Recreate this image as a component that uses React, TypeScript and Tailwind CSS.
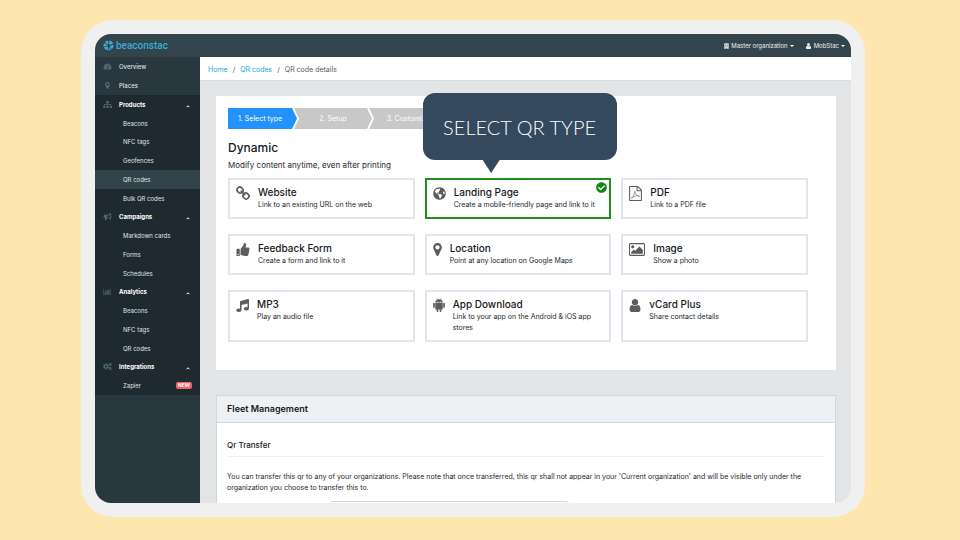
import type { ComponentType, ReactNode } from "react";
import {
  FaBuilding,
  FaBullhorn,
  FaCheckCircle,
  FaCogs,
  FaGlobeAmericas,
  FaSitemap,
  FaTachometerAlt,
  FaThumbsUp,
} from "react-icons/fa";

type IconProps = { className?: string };

const PinIcon = ({ className }: IconProps) => (
  <svg viewBox="384 128 1024 1536" fill="currentColor" className={className} aria-hidden="true">
    <path d="M1152 640q0-106-75-181t-181-75-181 75-75 181 75 181 181 75 181-75 75-181zm256 0q0 109-33 179l-364 774q-16 33-47.5 52t-67.5 19-67.5-19-46.5-52l-365-774q-33-70-33-179 0-212 150-362t362-150 362 150 150 362z" />
  </svg>
);

const UserIcon = ({ className }: IconProps) => (
  <svg viewBox="256 128 1280 1536" fill="currentColor" className={className} aria-hidden="true">
    <path d="M1536 1399q0 109-62.5 187t-150.5 78h-854q-88 0-150.5-78t-62.5-187q0-85 8.5-160.5t31.5-152 58.5-131 94-89 134.5-34.5q131 128 313 128t313-128q76 0 134.5 34.5t94 89 58.5 131 31.5 152 8.5 160.5zm-256-887q0 159-112.5 271.5t-271.5 112.5-271.5-112.5-112.5-271.5 112.5-271.5 271.5-112.5 271.5 112.5 112.5 271.5z" />
  </svg>
);

const ImageIcon = ({ className }: IconProps) => (
  <svg viewBox="-64 128 1920 1536" fill="currentColor" className={className} aria-hidden="true">
    <path d="M576 576q0 80-56 136t-136 56-136-56-56-136 56-136 136-56 136 56 56 136zm1024 384v448h-1408v-192l320-320 160 160 512-512zm96-704h-1600q-13 0-22.500 9.500t-9.500 22.500v1216q0 13 9.500 22.500t22.500 9.500h1600q13 0 22.500-9.500t9.500-22.500v-1216q0-13-9.500-22.500t-22.500-9.500zm160 32v1216q0 66-47 113t-113 47h-1600q-66 0-113-47t-47-113v-1216q0-66 47-113t113-47h1600q66 0 113 47t47 113z" />
  </svg>
);

const MusicIcon = ({ className }: IconProps) => (
  <svg viewBox="0 0 26 26" fill="currentColor" className={className} aria-hidden="true">
    <path d="M8 5.500Q8 4.300 9.200 4L24 0.200Q26 0 26 2V19H23V9L11 12.200V22H8z" />
    <ellipse cx="5.700" cy="22.500" rx="5.300" ry="3.300" />
    <ellipse cx="20.700" cy="19.500" rx="5.300" ry="3.300" />
  </svg>
);

const PdfIcon = ({ className }: IconProps) => (
  <svg viewBox="128 0 1536 1792" fill="currentColor" className={className} aria-hidden="true">
    <path d="M1596 380q28 28 48 76t20 88v1152q0 40-28 68t-68 28h-1344q-40 0-68-28t-28-68v-1600q0-40 28-68t68-28h896q40 0 88 20t76 48zm-444-244v376h376q-10-29-22-41l-313-313q-12-12-41-22zm384 1528v-1024h-416q-40 0-68-28t-28-68v-416h-768v1536h1280z" />
    <path
      d="M430 1480q120-60 240-290t160-500q30-100 0-90t10 160q90 330 310 430t230 60-130-70-300 10-390 130-130 160z"
      fill="none"
      stroke="currentColor"
      strokeWidth="65"
    />
  </svg>
);

const ChainIcon = ({ className }: IconProps) => (
  <svg viewBox="0 0 26 26" fill="none" stroke="currentColor" strokeWidth="3.2" className={className} aria-hidden="true">
    <rect x="2" y="2.500" width="11" height="10" rx="4.500" transform="rotate(45 7.500 7.500)" />
    <rect x="13" y="13.500" width="11" height="10" rx="4.500" transform="rotate(45 18.500 18.500)" />
    <path d="M9 9l8 8" />
  </svg>
);

const AndroidIcon = ({ className }: IconProps) => (
  <svg viewBox="0 0 24 28" fill="currentColor" className={className} aria-hidden="true">
    <path
      fillRule="evenodd"
      d="M4.500 9C4.500 6.200 6 4.200 8.400 3L7 0.700L7.700 0.300L9.200 2.700Q12 1.800 14.800 2.700L16.300 0.300L17 0.700L15.600 3C18 4.200 19.500 6.200 19.500 9zM8 5.500v1.300h1.300V5.500zM14.700 5.500v1.300H16V5.500z"
    />
    <path d="M4.500 10h15v11.500q0 1.500-1.500 1.500h-1.300v3.400a1.600 1.600 0 0 1-3.300 0V23h-2.800v3.400a1.600 1.600 0 0 1-3.300 0V23H6q-1.500 0-1.500-1.500z" />
    <rect x="0.300" y="9.700" width="3.400" height="10" rx="1.700" />
    <rect x="20.300" y="9.700" width="3.400" height="10" rx="1.700" />
  </svg>
);

const ChartIcon = ({ className }: IconProps) => (
  <svg viewBox="0 0 16 14" fill="currentColor" className={className} aria-hidden="true">
    <path d="M0 1h1.200v11.800H16V14H0zM3 7h2v5H3zM6 3.500h2V12H6zM9 5.500h2V12H9zM12 2h2v10h-2z" />
  </svg>
);

const BrandMark = ({ className }: IconProps) => (
  <svg viewBox="0 0 24 24" fill="#35aed6" className={className} aria-hidden="true">
    <path d="M11 1a11 11 0 0 0-7 4l6 5 2-2z" />
    <path d="M13.500 1v7.500l2.500 2 6.500-3.500a11 11 0 0 0-9-6z" />
    <path d="M2.500 7a11 11 0 0 0-1.500 7l8.500-1v-2z" />
    <path d="M23 10l-7.500 3-.5 3 4.500 4a11 11 0 0 0 3.500-10z" />
    <path d="M1.500 16a11 11 0 0 0 8.500 7l1-7.500-2-1z" />
    <path d="M13 15.500l-1 7.500a11 11 0 0 0 5.500-1.500z" />
  </svg>
);

interface NavRow {
  label: string;
  icon?: ComponentType<IconProps>;
  active?: boolean;
  badge?: string;
}

const topLinks: NavRow[] = [
  { label: "Overview", icon: FaTachometerAlt },
  { label: "Places", icon: PinIcon },
];

// rows with an icon are group headings, the rest are their children
const menuRows: NavRow[] = [
  { label: "Products", icon: FaSitemap },
  { label: "Beacons" },
  { label: "NFC tags" },
  { label: "Geofences" },
  { label: "QR codes", active: true },
  { label: "Bulk QR codes" },
  { label: "Campaigns", icon: FaBullhorn },
  { label: "Markdown cards" },
  { label: "Forms" },
  { label: "Schedules" },
  { label: "Analytics", icon: ChartIcon },
  { label: "Beacons" },
  { label: "NFC tags" },
  { label: "QR codes" },
  { label: "Integrations", icon: FaCogs },
  { label: "Zapier", badge: "NEW" },
];

const Sidebar = () => (
  <nav className="w-[105px] shrink-0 bg-[#29373e] text-[6px] text-[#dfe3e5]">
    {topLinks.map(({ label, icon: Icon }) => (
      <a key={label} href="#" className="flex h-[19px] items-center pl-2 font-medium">
        <span className="flex w-4 shrink-0">{Icon && <Icon className="h-[7px] w-[9px] text-[#566a75]" />}</span>
        {label}
      </a>
    ))}
    <div className="grid h-[300px] auto-rows-fr bg-[#1f2a30]">
      {menuRows.map(({ label, icon: Icon, active, badge }, i) =>
        Icon ? (
          <button key={i} type="button" className="flex items-center pr-[10px] pl-2 text-left font-bold text-white">
            <span className="flex w-4 shrink-0">
              <Icon className="h-[7px] w-[9px] text-[#4d6876]" />
            </span>
            <span className="flex-1">{label}</span>
            <svg viewBox="0 0 8 5" className="mt-1 h-[3px] w-1" fill="none" stroke="currentColor" strokeWidth="2" aria-hidden="true">
              <path d="M1 4l3-3 3 3" />
            </svg>
          </button>
        ) : (
          <a
            key={i}
            href="#"
            className={`flex items-center justify-between pr-2 pl-7 ${active ? "bg-[#31434b]" : ""}`}
          >
            {label}
            {badge && <span className="rounded-xs bg-[#f4636a] px-[2px] text-[5px] leading-[7px] font-bold text-white">{badge}</span>}
          </a>
        )
      )}
    </div>
  </nav>
);

const Caret = () => <span className="ml-[2px] border-x-2 border-t-2 border-x-transparent border-t-white" />;

const Header = () => (
  <header className="flex h-[23px] shrink-0 items-center bg-[#33444c] pr-[6px] pl-2 text-[6px] text-[#eef1f2]">
    <a href="#" className="flex items-center gap-[2px] font-[Roboto] text-[10px] font-medium text-[#35aed6]">
      <BrandMark className="h-[11px] w-[11px]" />
      beaconstac
    </a>
    <button type="button" className="ml-auto flex items-center">
      <FaBuilding className="mr-[2px] h-[6px] w-[5px]" />
      Master organization
      <Caret />
    </button>
    <button type="button" className="ml-3 flex items-center">
      <UserIcon className="mr-[3px] h-[6px] w-[5px]" />
      MobStac
      <Caret />
    </button>
  </header>
);

const Breadcrumb = () => (
  <div className="flex h-6 items-center gap-[5px] border-b border-[#d3dde3] bg-white px-2 pt-1 text-[7px] text-[#55616a]">
    <a href="#" className="text-[#20a8d8]">Home</a>
    <span>/</span>
    <a href="#" className="text-[#20a8d8]">QR codes</a>
    <span>/</span>
    <span>QR code details</span>
  </div>
);

const Steps = () => (
  <ol className="flex h-[21px] text-[7px] text-white">
    <li className="flex w-[69px] items-center bg-[#2492fc] pt-px pl-[10px] [clip-path:polygon(0_0,64px_0,100%_50%,64px_100%,0_100%)]">
      1. Select type
    </li>
    <li className="-ml-[3px] flex w-[78px] items-center justify-center bg-[#c8c8c8] pt-px [clip-path:polygon(0_0,73px_0,100%_50%,73px_100%,0_100%,5px_50%)]">
      2. Setup
    </li>
    <li className="-ml-[3px] flex w-[78px] items-center justify-center bg-[#c8c8c8] pt-px [clip-path:polygon(0_0,73px_0,100%_50%,73px_100%,0_100%,5px_50%)]">
      3. Customize
    </li>
  </ol>
);

interface TypeCardProps {
  title: string;
  text: string;
  icon: ReactNode;
  selected?: boolean;
}

const types: TypeCardProps[] = [
  { title: "Website", text: "Link to an existing URL on the web", icon: <ChainIcon className="h-[14px] w-[14px]" /> },
  {
    title: "Landing Page",
    text: "Create a mobile-friendly page and link to it",
    icon: <FaGlobeAmericas className="h-[13px] w-[13px]" />,
    selected: true,
  },
  { title: "PDF", text: "Link to a PDF file", icon: <PdfIcon className="h-[15px] w-[13px]" /> },
  { title: "Feedback Form", text: "Create a form and link to it", icon: <FaThumbsUp className="h-[13px] w-[14px]" /> },
  { title: "Location", text: "Point at any location on Google Maps", icon: <PinIcon className="h-[13px] w-[9px]" /> },
  { title: "Image", text: "Show a photo", icon: <ImageIcon className="h-[13px] w-4" /> },
  { title: "MP3", text: "Play an audio file", icon: <MusicIcon className="h-[13px] w-[13px]" /> },
  {
    title: "App Download",
    text: "Link to your app on the Android & iOS app stores",
    icon: <AndroidIcon className="h-[14px] w-3" />,
  },
  { title: "vCard Plus", text: "Share contact details", icon: <UserIcon className="h-[13px] w-3" /> },
];

const Hint = () => (
  <div className="absolute bottom-full -left-[2px] mb-[18px] flex h-[67px] w-[194px] items-center justify-center rounded-xl bg-[#34495e] font-[Lato] text-[20px] font-light whitespace-nowrap text-white">
    SELECT QR TYPE
    <span className="absolute top-full left-[60px] h-[13px] w-[17px] bg-[#34495e] [clip-path:polygon(0_0,100%_0,50%_100%)]" />
  </div>
);

const TypeCard = ({ title, text, icon, selected }: TypeCardProps) => (
  <div className="relative flex">
    <button
      type="button"
      aria-pressed={!!selected}
      className={`flex w-full items-start gap-2 border-2 px-[6px] pt-[5px] pb-[7px] text-left ${
        selected ? "border-[#1c8f1c]" : "border-[#e4e4ec]"
      }`}
    >
      <span className="flex h-4 shrink-0 items-center text-[#5c5c5c]">{icon}</span>
      <span>
        <span className="block text-[10px] leading-[14px] font-medium text-[#16191c]">{title}</span>
        <span className="block text-[7px] leading-[11px] text-[#23282c]">{text}</span>
      </span>
    </button>
    {selected && <FaCheckCircle className="absolute top-1 right-1 h-[11px] w-[11px] text-[#0a8a0f]" />}
    {selected && <Hint />}
  </div>
);

export default function App() {
  return (
    <div className="flex h-screen bg-[#fee7af] pt-5 pr-[95px] pb-[23px] pl-[81px] font-[Inter,sans-serif]">
      <div className="flex min-w-0 flex-1 rounded-[32px] bg-[#f0f0f0] p-[14px]">
        <div className="flex min-w-0 flex-1 flex-col overflow-hidden rounded-2xl">
          <Header />
          <div className="flex min-h-0 flex-1">
            <Sidebar />
            <main className="min-w-0 flex-1 overflow-hidden bg-[#e3e4e6]">
              <Breadcrumb />
              <div className="flex flex-col gap-[25px] py-[15px] pr-[15px] pl-4">
                <section className="bg-white pt-3 pr-7 pb-7 pl-3">
                  <Steps />
                  <h1 className="mt-[11px] text-[12px] leading-4 font-medium text-[#16191c]">Dynamic</h1>
                  <p className="mt-[2px] text-[8px] leading-[14px] text-[#23282c]">Modify content anytime, even after printing</p>
                  <div className="mt-[6px] grid grid-cols-3 gap-x-[10px] gap-y-[15px]">
                    {types.map((type) => (
                      <TypeCard key={type.title} {...type} />
                    ))}
                  </div>
                </section>

                <section className="border border-[#cfd8dc] bg-white">
                  <h2 className="border-b border-[#cfd8dc] bg-[#edf1f4] px-[10px] text-[9px] leading-[26px] font-semibold text-[#16191c]">
                    Fleet Management
                  </h2>
                  <div className="px-[10px] pt-[15px]">
                    <h3 className="border-b border-[#eceeef] pb-1 text-[8px] leading-[14px] font-medium text-[#16191c]">
                      Qr Transfer
                    </h3>
                    <p className="mt-[14px] text-[7px] leading-[11px] text-[#23282c]">
                      You can transfer this qr to any of your organizations. Please note that once transferred, this qr shall
                      not appear in your 'Current organization' and will be visible only under the organization you choose to
                      transfer this to.
                    </p>
                    <input
                      type="text"
                      aria-label="Organization"
                      className="mt-2 ml-[102px] block h-5 w-[240px] rounded-[3px] border border-[#cfd8dc]"
                    />
                  </div>
                </section>
              </div>
            </main>
          </div>
        </div>
      </div>
    </div>
  );
}
